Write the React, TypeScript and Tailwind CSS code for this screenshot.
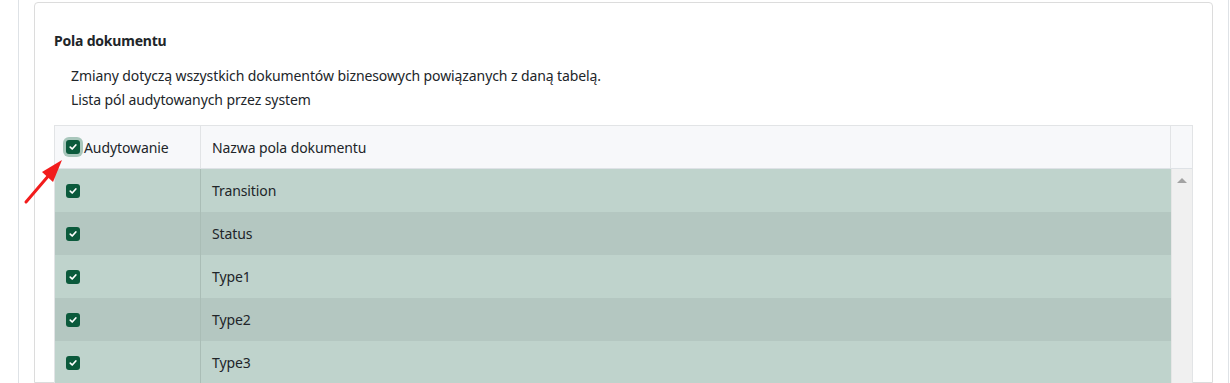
const rows = ["Transition", "Status", "Type1", "Type2", "Type3"];

const CheckBox = ({ focused = false }: { focused?: boolean }) => (
  <span
    className={
      "inline-flex h-[14px] w-[14px] items-center justify-center rounded-[3px] bg-[#0b5a3c] " +
      (focused ? "ring-[3px] ring-[#a9c7bc]" : "")
    }
  >
    <svg width="8" height="8" viewBox="0 0 8 8">
      <path d="M1.3 4.2 L3.2 6 L6.8 2" stroke="white" strokeWidth="1.7" fill="none" strokeLinecap="round" strokeLinejoin="round" />
    </svg>
  </span>
);

export default function App() {
  return (
    <div
      className="relative h-[383px] w-[1230px] overflow-hidden bg-white text-[14px] tracking-[-0.1px] text-[#212529]"
      style={{ fontFamily: '"Noto Sans", "Open Sans", sans-serif' }}
    >
      <div className="ml-[18px] mr-[1px] h-full border-x border-[#dee2e6] px-[15px] pt-[2px]">
        <div className="h-full rounded-t-[4px] border border-[#dcdcdc] px-[19px] pt-[26px]">
          <h3 className="text-[14px] font-bold leading-[24px] tracking-[-0.2px]">Pola dokumentu</h3>
          <div className="mt-[11px] pl-[17px] leading-[24px]">
            <p>Zmiany dotyczą wszystkich dokumentów biznesowych powiązanych z daną tabelą.</p>
            <p>Lista pól audytowanych przez system</p>
          </div>
          <div className="mt-[13px] border border-[#e2e4e6]">
            <div className="flex h-[43px] border-b border-[#dee2e6] bg-[#f7f8fa]">
              <div className="flex w-[146px] items-center gap-[4px] border-r border-[#e2e4e6] pl-[11px]">
                <CheckBox focused />
                <span>Audytowanie</span>
              </div>
              <div className="flex flex-1 items-center border-r border-[#e2e4e6] pl-[11px]">Nazwa pola dokumentu</div>
              <div className="w-[21px]" />
            </div>
            <div className="flex">
              <div className="flex-1">
                {rows.map((r, i) => (
                  <div key={r} className={"flex h-[43px] " + (i % 2 === 0 ? "bg-[#bfd3cc]" : "bg-[#b4c7c1]")}>
                    <div className="flex w-[146px] items-center border-r border-[#aabdb6] pl-[11px]">
                      <CheckBox />
                    </div>
                    <div className="flex flex-1 items-center pl-[11px]">{r}</div>
                  </div>
                ))}
              </div>
              <div className="flex w-[21px] justify-center border-l border-[#e6e6e6] bg-[#f0f0f0] pt-[9px]">
                <div className="h-0 w-0 border-x-[5px] border-b-[5px] border-x-transparent border-b-[#a3a3a3]" />
              </div>
            </div>
          </div>
        </div>
      </div>
      <svg className="absolute left-0 top-0" width="100" height="230" viewBox="0 0 100 230">
        <line x1="26" y1="202" x2="50" y2="174" stroke="#f21c1c" strokeWidth="3" strokeLinecap="round" />
        <polygon points="62,160 42,172 53,182" fill="#f21c1c" />
      </svg>
    </div>
  );
}
